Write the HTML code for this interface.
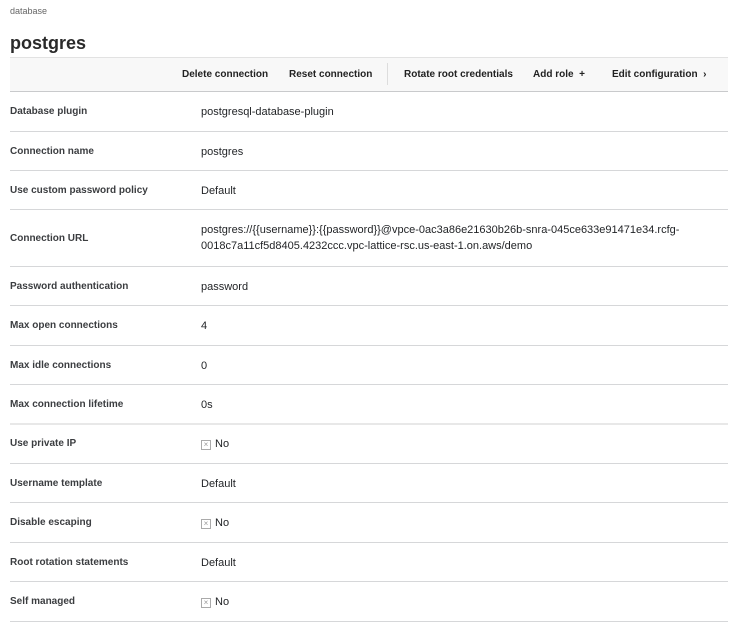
<!DOCTYPE html>
<html><head><style>
body{margin:0;width:742px;height:632px;background:#fff;font-family:"Liberation Sans",sans-serif;color:#1f2124;position:relative;overflow:hidden}
.crumb{position:absolute;left:10px;top:6px;font-size:9px;color:#666}
h1{position:absolute;left:10px;top:33px;margin:0;font-size:18px;font-weight:bold;color:#2a2a2a}
.tb{position:absolute;left:10px;top:57px;width:718px;height:33px;background:#f8f8f8;border-top:1px solid #e2e2e2;border-bottom:1px solid #c9cacc}
.tb span{position:absolute;top:11px;font-size:10px;font-weight:bold;color:#222}
.sep{position:absolute;left:387px;top:63px;width:1px;height:22px;background:#ddd}
.row{position:absolute;left:10px;width:718px;border-bottom:1px solid #d6d7d9}
.l{position:absolute;left:0;font-size:10px;font-weight:bold;color:#3b3d40}
.v{position:absolute;left:191px;font-size:11px;color:#1f2124;line-height:16px}
.cb{display:inline-block;width:8px;height:8px;border:1px solid #aaa;margin-right:4px;position:relative;top:0;font-size:8px;line-height:8px;text-align:center;color:#999}
</style></head><body>
<div class="crumb">database</div>
<h1>postgres</h1>
<div class="tb">
<span style="left:172px">Delete connection</span>
<span style="left:279px">Reset connection</span>
<span style="left:394px">Rotate root credentials</span>
<span style="left:523px">Add role &nbsp;+</span>
<span style="left:602px">Edit configuration &nbsp;›</span>
</div>
<div class="sep"></div>

<div class="row" style="top:92px;height:39px"><div class="l" style="top:14px">Database plugin</div><div class="v" style="top:12px">postgresql-database-plugin</div></div>
<div class="row" style="top:132px;height:38px"><div class="l" style="top:14px">Connection name</div><div class="v" style="top:12px">postgres</div></div>
<div class="row" style="top:171px;height:38px"><div class="l" style="top:14px">Use custom password policy</div><div class="v" style="top:12px">Default</div></div>
<div class="row" style="top:210px;height:56px"><div class="l" style="top:23px">Connection URL</div><div class="v" style="top:12px;width:520px">postgres://{{username}}:{{password}}@vpce-0ac3a86e21630b26b-snra-045ce633e91471e34.rcfg-0018c7a11cf5d8405.4232ccc.vpc-lattice-rsc.us-east-1.on.aws/demo</div></div>
<div class="row" style="top:267px;height:38px"><div class="l" style="top:14px">Password authentication</div><div class="v" style="top:12px">password</div></div>
<div class="row" style="top:306px;height:39px"><div class="l" style="top:14px">Max open connections</div><div class="v" style="top:12px">4</div></div>
<div class="row" style="top:346px;height:38px"><div class="l" style="top:14px">Max idle connections</div><div class="v" style="top:12px">0</div></div>
<div class="row" style="top:385px;height:38px;border-bottom:2px solid #e8e8e8"><div class="l" style="top:14px">Max connection lifetime</div><div class="v" style="top:12px">0s</div></div>
<div class="row" style="top:425px;height:38px"><div class="l" style="top:13px">Use private IP</div><div class="v" style="top:11px"><span class="cb">×</span>No</div></div>
<div class="row" style="top:464px;height:38px"><div class="l" style="top:14px">Username template</div><div class="v" style="top:12px">Default</div></div>
<div class="row" style="top:503px;height:39px"><div class="l" style="top:14px">Disable escaping</div><div class="v" style="top:12px"><span class="cb">×</span>No</div></div>
<div class="row" style="top:543px;height:38px"><div class="l" style="top:14px">Root rotation statements</div><div class="v" style="top:12px">Default</div></div>
<div class="row" style="top:582px;height:39px"><div class="l" style="top:14px">Self managed</div><div class="v" style="top:12px"><span class="cb">×</span>No</div></div>
</body></html>
